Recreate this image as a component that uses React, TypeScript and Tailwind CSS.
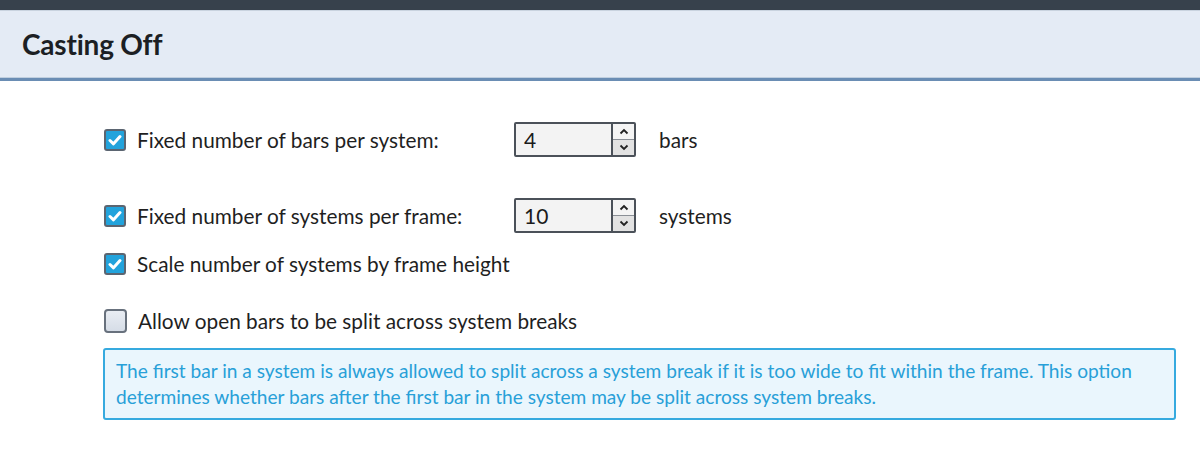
import React from "react";

function Check({ checked }: { checked: boolean }) {
  if (checked) {
    return (
      <div className="w-[22px] h-[22px] rounded-[3px] border-2 border-[#5b6571] bg-[#22a3dc] flex items-center justify-center shrink-0">
        <svg width="14" height="12" viewBox="0 0 14 12">
          <path d="M2 6.5 L5.5 9.8 L12 2.5" stroke="white" strokeWidth="3" fill="none" strokeLinecap="round" strokeLinejoin="round" />
        </svg>
      </div>
    );
  }
  return (
    <div className="w-[23px] h-[24px] rounded-[4px] border-2 border-[#68717d] bg-gradient-to-b from-[#e9edf3] to-[#d6dde7] shrink-0" />
  );
}

function Spin({ value }: { value: string }) {
  return (
    <div className="flex w-[122px] h-[35px] border-2 border-[#4b5159] bg-[#f3f3f3] rounded-[2px] shrink-0">
      <div className="flex-1 flex items-center pl-[8px] text-[21px] text-[#1b1b1b]">{value}</div>
      <div className="w-[23px] border-l-2 border-[#4b5159] flex flex-col">
        <div className="flex-1 flex items-center justify-center bg-[#f4f4f4] border-b border-[#8a8f96]">
          <svg width="10" height="7" viewBox="0 0 10 7"><path d="M1.5 5.5 L5 2 L8.5 5.5" stroke="#222" strokeWidth="1.8" fill="none" /></svg>
        </div>
        <div className="flex-1 flex items-center justify-center bg-[#e2e2e2]">
          <svg width="10" height="7" viewBox="0 0 10 7"><path d="M1.5 1.5 L5 5 L8.5 1.5" stroke="#222" strokeWidth="1.8" fill="none" /></svg>
        </div>
      </div>
    </div>
  );
}

export default function App() {
  const font = { fontFamily: "Lato, 'Noto Sans', sans-serif" };
  return (
    <div className="w-[1200px] h-[460px] bg-white overflow-hidden" style={font}>
      <div className="h-[10px] bg-[#37414c]" />
      <div className="h-[67px] bg-[#e4ebf5] border-t border-[#c9d3df] flex items-center pl-[22px]">
        <span className="text-[28px] font-bold text-[#1c1f24] tracking-[-0.2px]">Casting Off</span>
      </div>
      <div className="h-[1px] bg-[#c0cfdf]" />
      <div className="h-[3px] bg-[#6a8db4]" />
      <div className="pl-[104px] pr-[24px] pt-[41px] text-[20.8px] text-[#1f1f1f]">
        <div className="flex items-center h-[35px]">
          <Check checked />
          <span className="ml-[11px] w-[377px] shrink-0">Fixed number of bars per system:</span>
          <Spin value="4" />
          <span className="ml-[23px]">bars</span>
        </div>
        <div className="flex items-center h-[35px] mt-[41px]">
          <Check checked />
          <span className="ml-[11px] w-[377px] shrink-0">Fixed number of systems per frame:</span>
          <Spin value="10" />
          <span className="ml-[23px]">systems</span>
        </div>
        <div className="flex items-center h-[26px] mt-[18px]">
          <Check checked />
          <span className="ml-[11px]">Scale number of systems by frame height</span>
        </div>
        <div className="flex items-center h-[26px] mt-[31px]">
          <Check checked={false} />
          <span className="ml-[11px]">Allow open bars to be split across system breaks</span>
        </div>
        <div className="mt-[14px] ml-[-1px] w-[1073px] border-2 border-[#36aadf] rounded-[3px] bg-[#eaf6fd] px-[11px] pt-[8px] pb-[8px] text-[19.1px] leading-[26px] text-[#28a0d8]">
          The first bar in a system is always allowed to split across a system break if it is too wide to fit within the frame. This option determines whether bars after the first bar in the system may be split across system breaks.
        </div>
      </div>
    </div>
  );
}
